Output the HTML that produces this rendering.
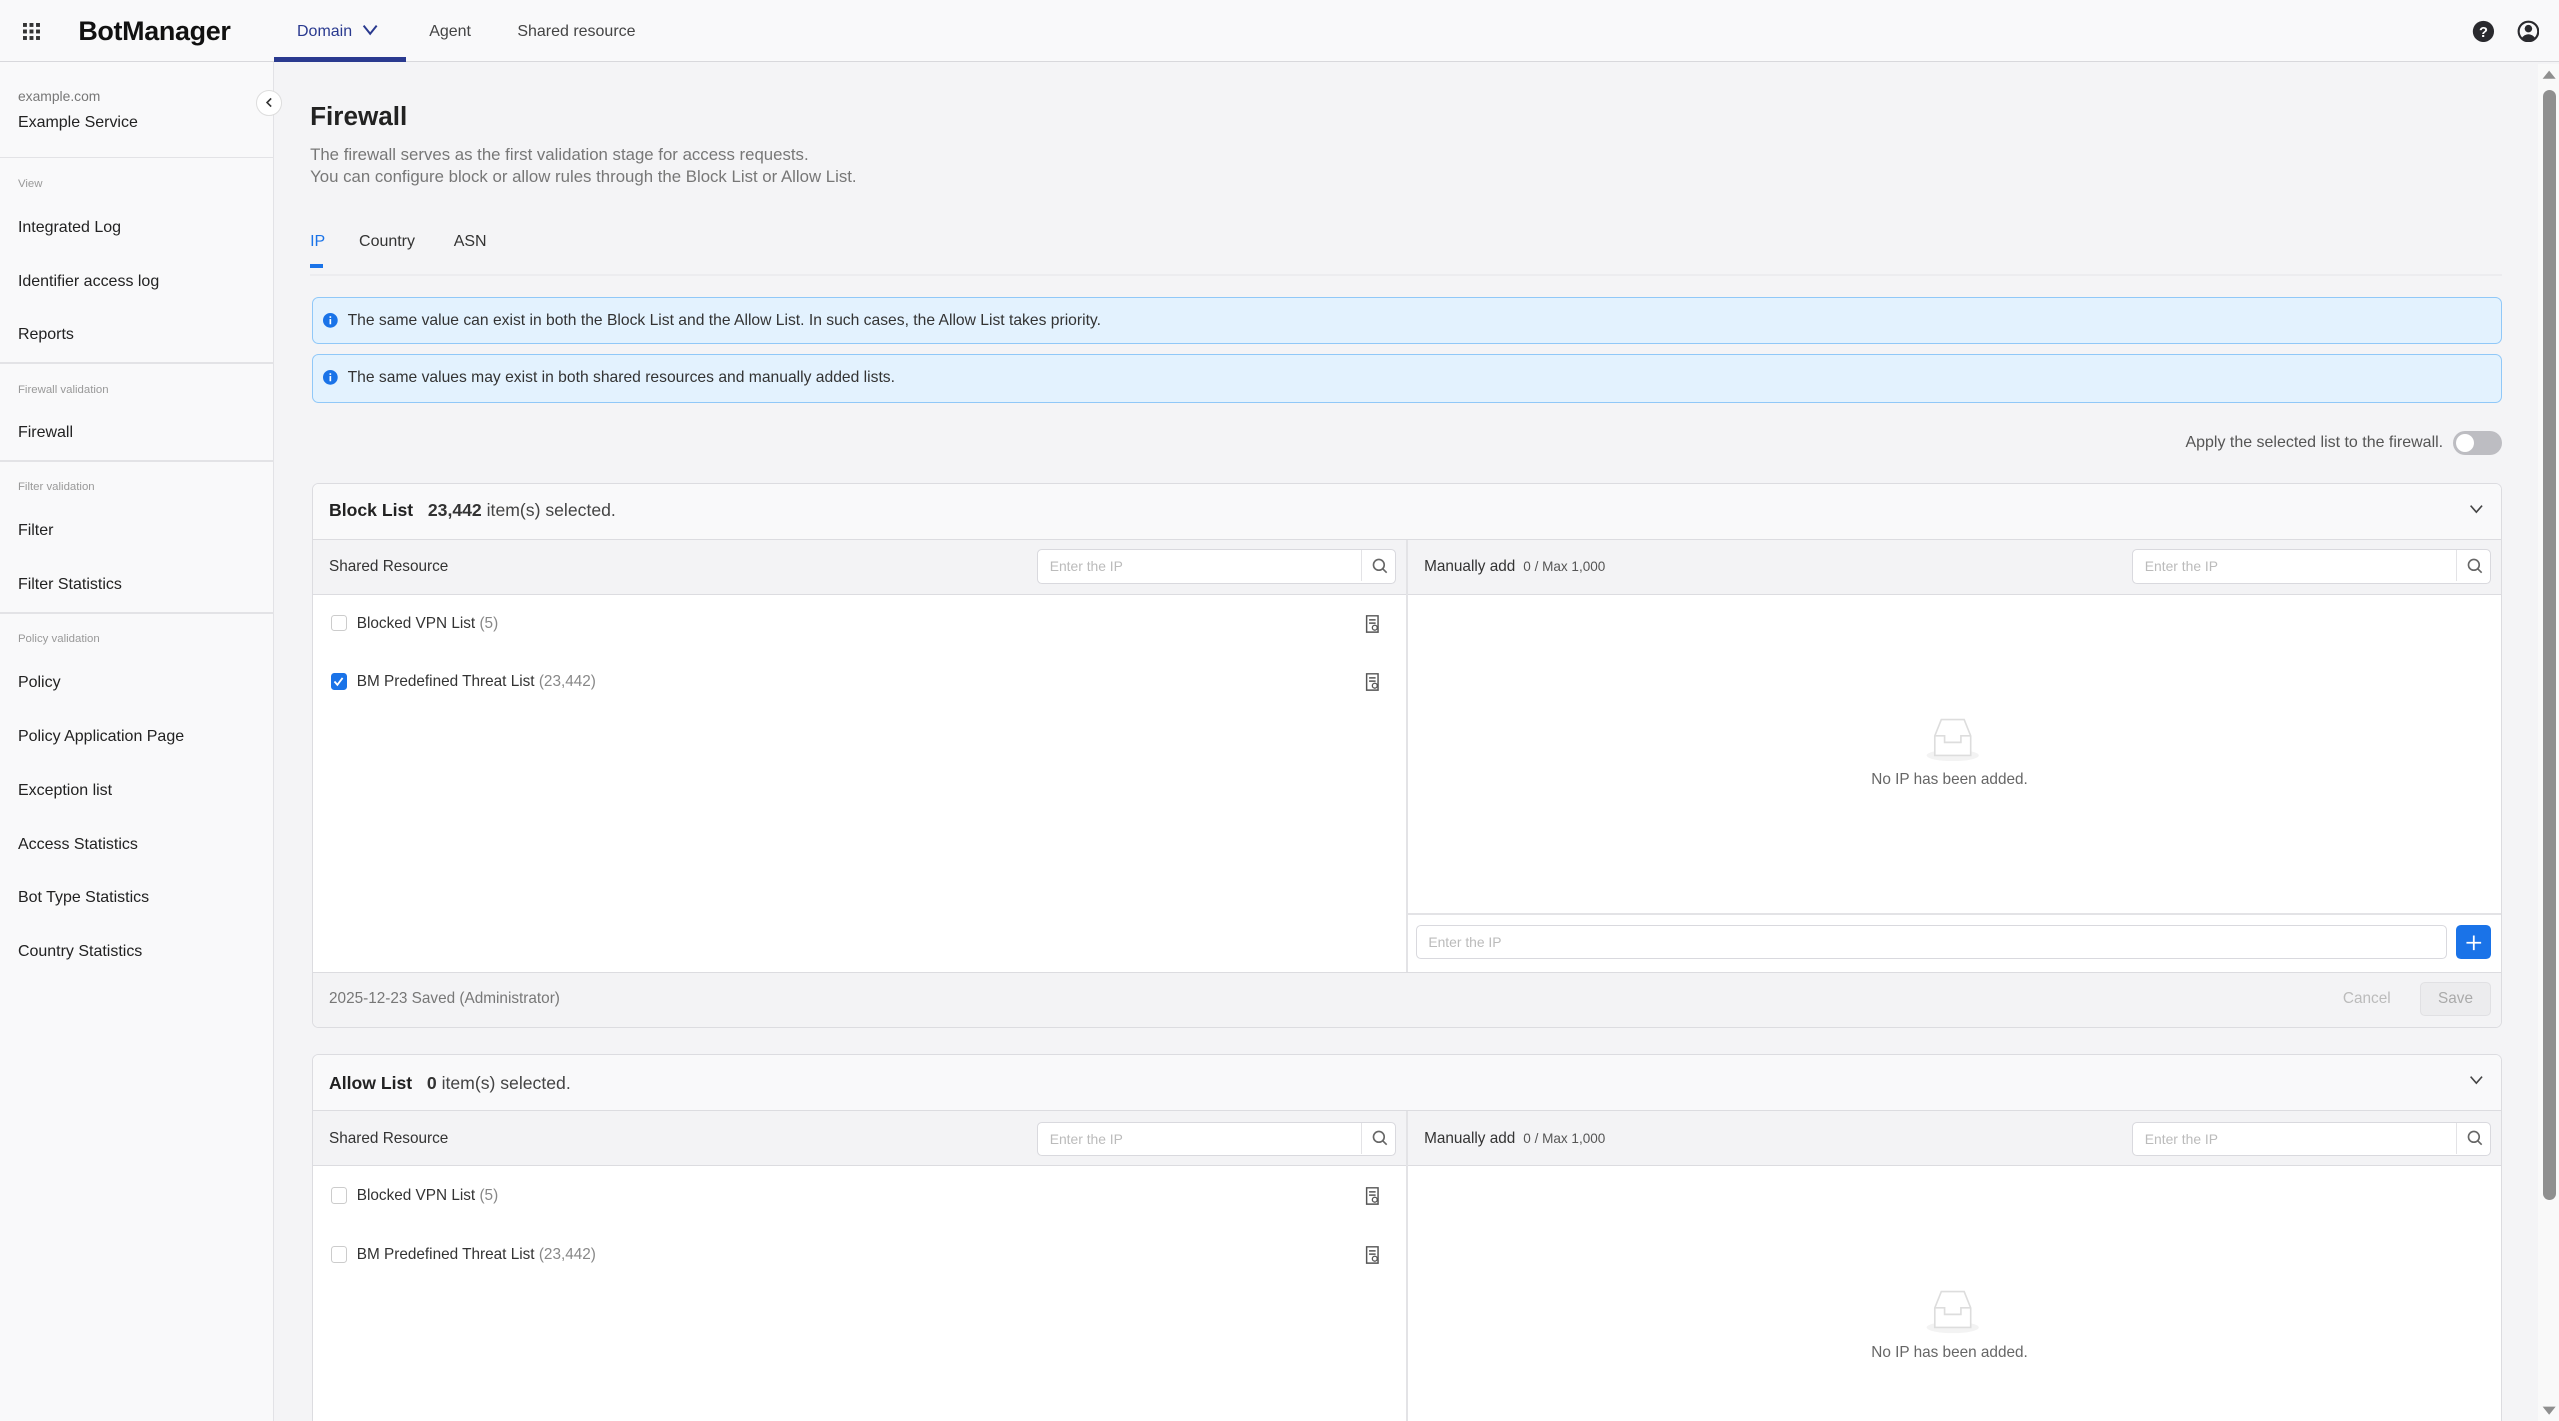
<!DOCTYPE html>
<html><head><meta charset="utf-8"><style>
*{box-sizing:border-box;margin:0;padding:0}
html,body{width:2559px;height:1421px;overflow:hidden}
body{font-family:"Liberation Sans",sans-serif;background:#f4f4f6;color:#222}
#r{zoom:1.632;width:1568px;height:871px;position:relative;overflow:hidden}
.a{position:absolute;white-space:nowrap}
.hdr{left:0;top:0;width:1568px;height:38px;background:#f9f9fa;border-bottom:1px solid #d8d8dc}
.side{left:0;top:38px;width:168px;height:833px;background:#f9f9fa;border-right:1px solid #e2e2e6}
.si{font-size:9.8px;color:#222;left:11px}
.sg{font-size:7px;color:#999;left:11px}
.dv{left:0;width:168px;height:1px;background:#e3e3e6}
.card{background:#fff;border:1px solid #dcdce0;border-radius:4px;left:191px;width:1342px;overflow:hidden}
.ch{position:absolute;left:0;top:0;width:100%;height:34px;background:#f9f9fa;border-bottom:1px solid #dcdce0}
.sh{position:absolute;left:0;top:34px;width:100%;height:34px;background:#f3f3f5;border-bottom:1px solid #dcdce0}
.inp{position:absolute;height:21px;background:#fff;border:1px solid #d9d9de;border-radius:3px;font-size:8.5px;color:#bbb;padding:5px 7px}
.inp .s{position:absolute;right:0;top:0;width:21px;height:19px;border-left:1px solid #e3e3e6}
.cb{position:absolute;width:10px;height:10px;border:1px solid #ccc;border-radius:2px;background:#fff}
.t9{font-size:9.4px}
</style></head><body><div id="r">
<div class="a hdr"></div>
<svg class="a" style="left:14px;top:14px" width="11" height="11" viewBox="0 0 11 11" fill="#333"><rect x="0" y="0" width="2.4" height="2.4"/><rect x="4" y="0" width="2.4" height="2.4"/><rect x="8" y="0" width="2.4" height="2.4"/><rect x="0" y="4" width="2.4" height="2.4"/><rect x="4" y="4" width="2.4" height="2.4"/><rect x="8" y="4" width="2.4" height="2.4"/><rect x="0" y="8" width="2.4" height="2.4"/><rect x="4" y="8" width="2.4" height="2.4"/><rect x="8" y="8" width="2.4" height="2.4"/></svg>
<div class="a" style="left:48px;top:10px;font-size:16.5px;font-weight:bold;color:#111;letter-spacing:-0.2px">BotManager</div>
<div class="a" style="left:182px;top:14px;font-size:9.8px;color:#2a3a8f">Domain</div>
<svg class="a" style="left:222px;top:15px" width="10" height="8" viewBox="0 0 10 8"><path d="M1 1 L5 6 L9 1" stroke="#2a3a8f" stroke-width="1.2" fill="none"/></svg>
<div class="a" style="left:168px;top:35px;width:81px;height:3px;background:#2a3a8f"></div>
<div class="a" style="left:263px;top:14px;font-size:9.8px;color:#444">Agent</div>
<div class="a" style="left:317px;top:14px;font-size:9.8px;color:#444">Shared resource</div>
<svg class="a" style="left:1515px;top:12px" width="14" height="14" viewBox="0 0 14 14"><circle cx="7" cy="7" r="6.5" fill="#2a2a2e"/><text x="7" y="10.5" font-size="9" font-weight="bold" fill="#fff" text-anchor="middle" font-family="Liberation Sans">?</text></svg>
<svg class="a" style="left:1542px;top:12px" width="14" height="14" viewBox="0 0 14 14"><circle cx="7" cy="7" r="6" fill="none" stroke="#2a2a2e" stroke-width="1.3"/><circle cx="7" cy="5.3" r="2.3" fill="#2a2a2e"/><path d="M2.8 11 Q7 6.5 11.2 11 Q7 14 2.8 11Z" fill="#2a2a2e"/></svg>

<div class="a side"></div>
<div class="a" style="left:11px;top:54px;font-size:8.5px;color:#777">example.com</div>
<div class="a si" style="top:70px;color:#222">Example Service</div>
<div class="a dv" style="top:96px"></div>
<div class="a sg" style="top:109px">View</div>
<div class="a si" style="top:134px">Integrated Log</div>
<div class="a si" style="top:167px">Identifier access log</div>
<div class="a si" style="top:200px">Reports</div>
<div class="a dv" style="top:222px"></div>
<div class="a sg" style="top:235px">Firewall validation</div>
<div class="a si" style="top:260px">Firewall</div>
<div class="a dv" style="top:282px"></div>
<div class="a sg" style="top:295px">Filter validation</div>
<div class="a si" style="top:320px">Filter</div>
<div class="a si" style="top:353px">Filter Statistics</div>
<div class="a dv" style="top:375px"></div>
<div class="a sg" style="top:388px">Policy validation</div>
<div class="a si" style="top:413px">Policy</div>
<div class="a si" style="top:446px">Policy Application Page</div>
<div class="a si" style="top:479px">Exception list</div>
<div class="a si" style="top:512px">Access Statistics</div>
<div class="a si" style="top:545px">Bot Type Statistics</div>
<div class="a si" style="top:578px">Country Statistics</div>
<div class="a" style="left:157px;top:55px;width:16px;height:16px;border-radius:50%;background:#fff;border:1px solid #ddd"></div>
<svg class="a" style="left:161px;top:59px" width="8" height="8" viewBox="0 0 8 8"><path d="M5 1.5 L2.5 4 L5 6.5" stroke="#333" stroke-width="1" fill="none"/></svg>

<div class="a" style="left:190px;top:62px;font-size:16px;font-weight:bold;color:#222">Firewall</div>
<div class="a" style="left:190px;top:88px;font-size:10.3px;color:#777;line-height:14px">The firewall serves as the first validation stage for access requests.<br>You can configure block or allow rules through the Block List or Allow List.</div>
<div class="a" style="left:190px;top:143px;font-size:9.8px;color:#1a73e8">IP</div>
<div class="a" style="left:220px;top:143px;font-size:9.8px;color:#333">Country</div>
<div class="a" style="left:278px;top:143px;font-size:9.8px;color:#333">ASN</div>
<div class="a" style="left:190px;top:168px;width:1343px;height:1px;background:#ececef"></div>
<div class="a" style="left:190px;top:162px;width:8px;height:2px;background:#1a73e8"></div>

<div class="a" style="left:191px;top:182px;width:1342px;height:29px;background:#e3f2fe;border:1px solid #90c8f8;border-radius:4px"></div>
<div class="a" style="left:191px;top:217px;width:1342px;height:30px;background:#e3f2fe;border:1px solid #90c8f8;border-radius:4px"></div>
<svg class="a" style="left:198px;top:192px" width="9" height="9" viewBox="0 0 9 9"><circle cx="4.5" cy="4.5" r="4.5" fill="#1a73e8"/><rect x="4" y="3.7" width="1" height="3.2" fill="#fff"/><rect x="4" y="2" width="1" height="1" fill="#fff"/></svg>
<svg class="a" style="left:198px;top:227px" width="9" height="9" viewBox="0 0 9 9"><circle cx="4.5" cy="4.5" r="4.5" fill="#1a73e8"/><rect x="4" y="3.7" width="1" height="3.2" fill="#fff"/><rect x="4" y="2" width="1" height="1" fill="#fff"/></svg>
<div class="a" style="left:213px;top:191px;font-size:9.6px;color:#333">The same value can exist in both the Block List and the Allow List. In such cases, the Allow List takes priority.</div>
<div class="a" style="left:213px;top:226px;font-size:9.6px;color:#333">The same values may exist in both shared resources and manually added lists.</div>

<div class="a" style="right:71px;top:266px;font-size:9.8px;color:#555">Apply the selected list to the firewall.</div>
<div class="a" style="left:1503px;top:264px;width:30px;height:15px;border-radius:8px;background:#bdbdc2"></div>
<div class="a" style="left:1505px;top:266px;width:11px;height:11px;border-radius:50%;background:#fff"></div>

<!-- Block list -->
<div class="a card" style="top:296px;height:334px">
 <div class="ch"></div>
 <div class="a" style="left:10px;top:10px;font-size:10.8px"><b style="color:#222">Block List</b>&nbsp;&nbsp; <b style="font-weight:600;color:#333">23,442</b> <span style="color:#444">item(s) selected.</span></div>
 <svg class="a" style="left:1321px;top:12px" width="9" height="7" viewBox="0 0 9 7"><path d="M1 1 L4.5 5 L8 1" stroke="#444" stroke-width="1" fill="none"/></svg>
 <div class="sh"></div>
 <div class="a t9" style="left:10px;top:45px;color:#333">Shared Resource</div>
 <div class="inp" style="left:444px;top:40px;width:220px">Enter the IP<div class="s"></div></div>
 <svg class="a" style="left:649px;top:45px" width="10" height="10" viewBox="0 0 10 10"><circle cx="4.2" cy="4.2" r="3.3" stroke="#666" fill="none"/><path d="M6.6 6.6 L9 9" stroke="#666"/></svg>
 <div class="a" style="left:670px;top:34px;width:1px;height:266px;background:#e3e3e6"></div>
 <div class="a t9" style="left:681px;top:45px;color:#333">Manually add <span style="font-size:8.3px;color:#555">&nbsp;0 / Max 1,000</span></div>
 <div class="inp" style="left:1115px;top:40px;width:220px">Enter the IP<div class="s"></div></div>
 <svg class="a" style="left:1320px;top:45px" width="10" height="10" viewBox="0 0 10 10"><circle cx="4.2" cy="4.2" r="3.3" stroke="#666" fill="none"/><path d="M6.6 6.6 L9 9" stroke="#666"/></svg>
 <div class="cb" style="left:11px;top:80px"></div>
 <div class="a t9" style="left:27px;top:80px;color:#333">Blocked VPN List <span style="color:#888">(5)</span></div>
 <div class="cb" style="left:11px;top:116px;background:#1a73e8;border-color:#1a73e8"></div>
 <svg class="a" style="left:12px;top:117px" width="8" height="8" viewBox="0 0 8 8"><path d="M1.5 4 L3.3 6 L6.5 1.8" stroke="#fff" stroke-width="1.1" fill="none"/></svg>
 <div class="a t9" style="left:27px;top:116px;color:#333">BM Predefined Threat List <span style="color:#888">(23,442)</span></div>
 <svg class="a" style="left:645px;top:80px" width="9" height="11" viewBox="0 0 9 11"><path d="M1 .5H8V10.5H1Z M2.5 3H6.5 M2.5 5H6.5" stroke="#555" fill="none" stroke-width=".9"/><circle cx="6" cy="7.8" r="1.5" fill="#fff" stroke="#555" stroke-width=".8"/></svg>
 <svg class="a" style="left:645px;top:116px" width="9" height="11" viewBox="0 0 9 11"><path d="M1 .5H8V10.5H1Z M2.5 3H6.5 M2.5 5H6.5" stroke="#555" fill="none" stroke-width=".9"/><circle cx="6" cy="7.8" r="1.5" fill="#fff" stroke="#555" stroke-width=".8"/></svg>
 <svg class="a" style="left:988px;top:140px" width="34" height="30" viewBox="0 0 34 30"><ellipse cx="17" cy="26" rx="16" ry="3.5" fill="#f3f3f3"/><path d="M10 4 L24 4 L28 14 L28 26 L6 26 L6 14 Z" fill="#fff" stroke="#ddd"/><path d="M6 14 H12 V18 H22 V14 H28" fill="none" stroke="#ddd"/></svg>
 <div class="a" style="left:955px;top:176px;font-size:9.4px;color:#666">No IP has been added.</div>
 <div class="a" style="left:670px;top:263px;width:672px;height:1px;background:#e3e3e6"></div>
 <div class="inp" style="left:676px;top:270px;width:632px">Enter the IP</div>
 <div class="a" style="left:1313px;top:270px;width:22px;height:21px;border-radius:3px;background:#1a73e8"></div>
 <svg class="a" style="left:1318px;top:275px" width="12" height="12" viewBox="0 0 12 12"><path d="M6 1.5V10.5M1.5 6H10.5" stroke="#fff" stroke-width="1.1"/></svg>
 <div class="a" style="left:0;top:299px;width:100%;height:35px;background:#f3f3f5;border-top:1px solid #dcdce0"></div>
 <div class="a t9" style="left:10px;top:310px;color:#777">2025-12-23 Saved (Administrator)</div>
 <div class="a t9" style="left:1244px;top:310px;color:#bbb">Cancel</div>
 <div class="a" style="left:1291px;top:305px;width:44px;height:21px;border-radius:3px;background:#ececee;border:1px solid #e0e0e3;font-size:9.4px;color:#aaa;text-align:center;line-height:19px">Save</div>
</div>

<!-- Allow list -->
<div class="a card" style="top:646px;height:240px">
 <div class="ch"></div>
 <div class="a" style="left:10px;top:11px;font-size:10.8px"><b style="color:#222">Allow List</b>&nbsp;&nbsp; <b style="font-weight:600;color:#333">0</b> <span style="color:#444">item(s) selected.</span></div>
 <svg class="a" style="left:1321px;top:12px" width="9" height="7" viewBox="0 0 9 7"><path d="M1 1 L4.5 5 L8 1" stroke="#444" stroke-width="1" fill="none"/></svg>
 <div class="sh"></div>
 <div class="a t9" style="left:10px;top:46px;color:#333">Shared Resource</div>
 <div class="inp" style="left:444px;top:41px;width:220px">Enter the IP<div class="s"></div></div>
 <svg class="a" style="left:649px;top:46px" width="10" height="10" viewBox="0 0 10 10"><circle cx="4.2" cy="4.2" r="3.3" stroke="#666" fill="none"/><path d="M6.6 6.6 L9 9" stroke="#666"/></svg>
 <div class="a" style="left:670px;top:34px;width:1px;height:220px;background:#e3e3e6"></div>
 <div class="a t9" style="left:681px;top:46px;color:#333">Manually add <span style="font-size:8.3px;color:#555">&nbsp;0 / Max 1,000</span></div>
 <div class="inp" style="left:1115px;top:41px;width:220px">Enter the IP<div class="s"></div></div>
 <svg class="a" style="left:1320px;top:46px" width="10" height="10" viewBox="0 0 10 10"><circle cx="4.2" cy="4.2" r="3.3" stroke="#666" fill="none"/><path d="M6.6 6.6 L9 9" stroke="#666"/></svg>
 <div class="cb" style="left:11px;top:81px"></div>
 <div class="a t9" style="left:27px;top:81px;color:#333">Blocked VPN List <span style="color:#888">(5)</span></div>
 <div class="cb" style="left:11px;top:117px"></div>
 <div class="a t9" style="left:27px;top:117px;color:#333">BM Predefined Threat List <span style="color:#888">(23,442)</span></div>
 <svg class="a" style="left:645px;top:81px" width="9" height="11" viewBox="0 0 9 11"><path d="M1 .5H8V10.5H1Z M2.5 3H6.5 M2.5 5H6.5" stroke="#555" fill="none" stroke-width=".9"/><circle cx="6" cy="7.8" r="1.5" fill="#fff" stroke="#555" stroke-width=".8"/></svg>
 <svg class="a" style="left:645px;top:117px" width="9" height="11" viewBox="0 0 9 11"><path d="M1 .5H8V10.5H1Z M2.5 3H6.5 M2.5 5H6.5" stroke="#555" fill="none" stroke-width=".9"/><circle cx="6" cy="7.8" r="1.5" fill="#fff" stroke="#555" stroke-width=".8"/></svg>
 <svg class="a" style="left:988px;top:141px" width="34" height="30" viewBox="0 0 34 30"><ellipse cx="17" cy="26" rx="16" ry="3.5" fill="#f3f3f3"/><path d="M10 4 L24 4 L28 14 L28 26 L6 26 L6 14 Z" fill="#fff" stroke="#ddd"/><path d="M6 14 H12 V18 H22 V14 H28" fill="none" stroke="#ddd"/></svg>
 <div class="a" style="left:955px;top:177px;font-size:9.4px;color:#666">No IP has been added.</div>
</div>

<!-- scrollbar -->
<div class="a" style="left:1555px;top:39px;width:13px;height:832px;background:#f9f9f9"></div>
<svg class="a" style="left:1557px;top:42px" width="10" height="7" viewBox="0 0 10 7"><path d="M5 1 L9 6 H1Z" fill="#8f8f8f"/></svg>
<div class="a" style="left:1558px;top:55px;width:8px;height:680px;border-radius:4px;background:#8f8f8f"></div>
<svg class="a" style="left:1557px;top:861px" width="10" height="7" viewBox="0 0 10 7"><path d="M1 1 H9 L5 6Z" fill="#8f8f8f"/></svg>
</div></body></html>
